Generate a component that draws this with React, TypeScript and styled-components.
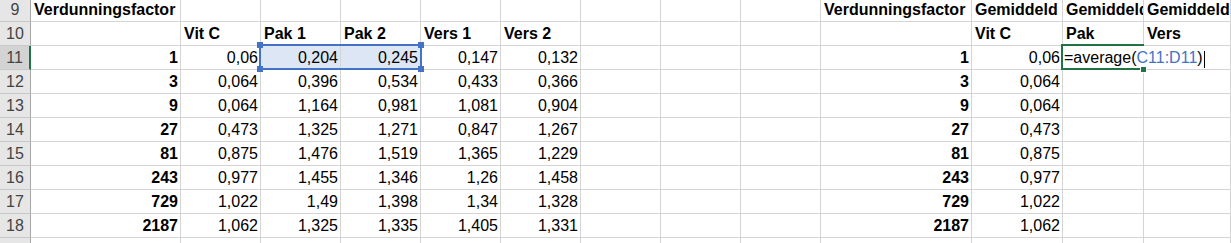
import React from "react";
import styled, { createGlobalStyle } from "styled-components";

type CellDef = { text?: string; bold?: boolean; right?: boolean };

const head = (t: string): CellDef => ({ text: t, bold: true });
const key = (t: string): CellDef => ({ text: t, bold: true, right: true });
const num = (t: string): CellDef => ({ text: t, right: true });
const empty: CellDef = {};

// factor, Vit C, Pak 1, Pak 2, Vers 1, Vers 2
const data: string[][] = [
  ["1", "0,06", "0,204", "0,245", "0,147", "0,132"],
  ["3", "0,064", "0,396", "0,534", "0,433", "0,366"],
  ["9", "0,064", "1,164", "0,981", "1,081", "0,904"],
  ["27", "0,473", "1,325", "1,271", "0,847", "1,267"],
  ["81", "0,875", "1,476", "1,519", "1,365", "1,229"],
  ["243", "0,977", "1,455", "1,346", "1,26", "1,458"],
  ["729", "1,022", "1,49", "1,398", "1,34", "1,328"],
  ["2187", "1,062", "1,325", "1,335", "1,405", "1,331"],
];

// row 19 is only a sliver at the bottom, its number is not visible
const rows: { n: number; label: string; cells: CellDef[] }[] = [
  {
    n: 9,
    label: "9",
    cells: [
      head("Verdunningsfactor"),
      empty, empty, empty, empty, empty, empty, empty, empty,
      head("Verdunningsfactor"),
      head("Gemiddeld"),
      head("Gemiddeld"),
      head("Gemiddeld"),
    ],
  },
  {
    n: 10,
    label: "10",
    cells: [
      empty,
      head("Vit C"), head("Pak 1"), head("Pak 2"), head("Vers 1"), head("Vers 2"),
      empty, empty, empty, empty,
      head("Vit C"), head("Pak"), head("Vers"),
    ],
  },
  ...data.map((d, i) => ({
    n: 11 + i,
    label: String(11 + i),
    cells: [
      key(d[0]), num(d[1]), num(d[2]), num(d[3]), num(d[4]), num(d[5]),
      empty, empty, empty,
      key(d[0]), num(d[1]), empty, empty,
    ],
  })),
  { n: 19, label: "", cells: Array(13).fill(empty) },
];

const GlobalStyle = createGlobalStyle`
  html, body {
    margin: 0;
    padding: 0;
    background: #fff;
    overflow: hidden;
  }
`;

const Sheet = styled.div`
  display: grid;
  grid-template-columns: 31px 150px repeat(8, 80px) 151px 91px 81px 1fr;
  grid-template-rows: 22px repeat(10, 24px);
  height: 243px;
  overflow: hidden;
  font-family: "Liberation Sans", Arial, sans-serif;
  font-size: 16px;
  line-height: 16px;
  color: #000;
`;

const RowHeader = styled.div<{ $active?: boolean }>`
  box-sizing: border-box;
  display: flex;
  align-items: flex-end;
  justify-content: center;
  padding-bottom: 3px;
  background: ${({ $active }) => ($active ? "#d3d3d3" : "#e6e6e6")};
  color: #444;
  border-bottom: 1px solid #c8c8c8;
  border-right: ${({ $active }) => ($active ? "2px solid #217346" : "1px solid #a6a6a6")};
`;

const Cell = styled.div<{ $right?: boolean; $bold?: boolean; $picked?: boolean; $open?: boolean }>`
  box-sizing: border-box;
  display: flex;
  align-items: flex-end;
  justify-content: ${({ $right }) => ($right ? "flex-end" : "flex-start")};
  padding: 0 2px 3px 3px;
  border-right: 1px solid #d4d4d4;
  border-bottom: 1px solid #d4d4d4;
  background: ${({ $picked }) => ($picked ? "#dce6f4" : "#fff")};
  font-weight: ${({ $bold }) => ($bold ? 700 : 400)};
  white-space: nowrap;
  overflow: ${({ $open }) => ($open ? "visible" : "hidden")};
  position: ${({ $open }) => ($open ? "relative" : "static")};
  z-index: ${({ $open }) => ($open ? 1 : "auto")};
`;

const RangeBox = styled.div`
  position: absolute;
  left: -2px;
  top: -2px;
  width: 163px;
  height: 26px;
  box-sizing: border-box;
  border: 2px solid #4472c4;
`;

const Handle = styled.span<{ $x: "left" | "right"; $y: "top" | "bottom" }>`
  position: absolute;
  width: 6px;
  height: 6px;
  background: #4472c4;
  ${({ $x }) => $x}: -4px;
  ${({ $y }) => $y}: -4px;
`;

const ActiveBox = styled.div`
  position: absolute;
  left: -2px;
  top: -2px;
  width: 83px;
  height: 26px;
  box-sizing: border-box;
  border: 2px solid #217346;
`;

const FillHandle = styled.span`
  position: absolute;
  left: 77px;
  top: 20px;
  width: 5px;
  height: 5px;
  background: #217346;
  border: 1px solid #fff;
`;

const Editor = styled.div`
  position: absolute;
  left: 0;
  top: 0;
  bottom: 1px;
  width: 148px;
  box-sizing: border-box;
  display: flex;
  align-items: flex-end;
  padding: 0 0 2px 1px;
  background: #fff;
  font-weight: 400;
`;

const Ref = styled.span`
  color: #4472c4;
`;

const Caret = styled.span`
  display: inline-block;
  width: 1px;
  height: 17px;
  margin-left: 1px;
  margin-bottom: -2px;
  background: #000;
`;

const App: React.FC = () => {
  return (
    <>
      <GlobalStyle />
      <Sheet>
        {rows.map((row) => (
          <React.Fragment key={row.n}>
            <RowHeader $active={row.n === 11}>{row.label}</RowHeader>
            {row.cells.map((c, i) => {
              const picked = row.n === 11 && (i === 2 || i === 3);
              const editing = row.n === 11 && i === 11;
              const ranged = row.n === 11 && i === 2;
              return (
                <Cell
                  key={i}
                  $right={c.right}
                  $bold={c.bold}
                  $picked={picked}
                  $open={ranged || editing}
                >
                  {c.text}
                  {ranged && (
                    <RangeBox>
                      <Handle $x="left" $y="top" />
                      <Handle $x="right" $y="top" />
                      <Handle $x="left" $y="bottom" />
                      <Handle $x="right" $y="bottom" />
                    </RangeBox>
                  )}
                  {editing && (
                    <>
                      <ActiveBox />
                      <Editor>
                        =average(<Ref>C11:D11</Ref>)<Caret />
                      </Editor>
                      <FillHandle />
                    </>
                  )}
                </Cell>
              );
            })}
          </React.Fragment>
        ))}
      </Sheet>
    </>
  );
};

export default App;
